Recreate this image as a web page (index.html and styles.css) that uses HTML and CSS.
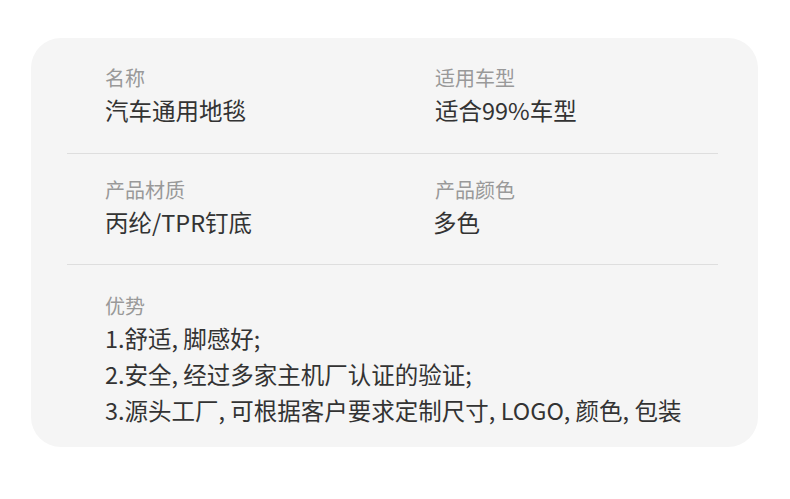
FILE: index.html
```html
<!DOCTYPE html>
<html lang="zh">
<head>
    <meta charset="UTF-8">
    <meta name="viewport" content="width=device-width, initial-scale=1.0">
    <title>汽车通用地毯 - 产品参数</title>
    <link rel="stylesheet" href="styles.css">
</head>
<body>
    <div class="card">
        <div class="row row-first">
            <div class="cell">
                <div class="label">名称</div>
                <div class="value">汽车通用地毯</div>
            </div>
            <div class="cell">
                <div class="label">适用车型</div>
                <div class="value">适合99%车型</div>
            </div>
        </div>

        <div class="row row-second">
            <div class="cell">
                <div class="label">产品材质</div>
                <div class="value">丙纶/TPR钉底</div>
            </div>
            <div class="cell">
                <div class="label">产品颜色</div>
                <div class="value value-tight">多色</div>
            </div>
        </div>

        <div class="row row-last">
            <div class="cell cell-wide">
                <div class="label">优势</div>
                <ul class="list">
                    <li>1.舒适, 脚感好;</li>
                    <li>2.安全, 经过多家主机厂认证的验证;</li>
                    <li>3.源头工厂, 可根据客户要求定制尺寸, LOGO, 颜色, 包装</li>
                </ul>
            </div>
        </div>
    </div>
</body>
</html>
```

FILE: styles.css
```css
body {
    margin: 0;
    padding: 38px 32px 52px 31px;
    background: #fff;
    font-family: "Noto Sans CJK SC", "Noto Sans", sans-serif;
    color: #333;
}
.card {
    background: #f5f5f5;
    border-radius: 30px;
    padding: 0 40px 0 36px;
    height: 409px;
    box-sizing: border-box;
}
.row {
    display: grid;
    grid-template-columns: 330px 1fr;
    padding-left: 38px;
    border-bottom: 1px solid #dedede;
}
.row-first {
    padding-top: 28px;
    padding-bottom: 27px;
}
.row-second {
    padding-top: 24px;
    padding-bottom: 26px;
}
.row-last {
    border-bottom: none;
    padding-top: 29px;
}
.cell-wide {
    grid-column: 1 / 3;
}
.label {
    font-size: 20px;
    line-height: 24px;
    color: #999;
}
.value {
    margin-top: 4px;
    font-size: 23.5px;
    line-height: 32px;
    color: #333;
}
.value-tight {
    margin-left: -2px;
}
.list {
    list-style: none;
    margin: 2px 0 0;
    padding: 0;
    font-size: 23.5px;
    line-height: 36px;
    color: #333;
}
```
